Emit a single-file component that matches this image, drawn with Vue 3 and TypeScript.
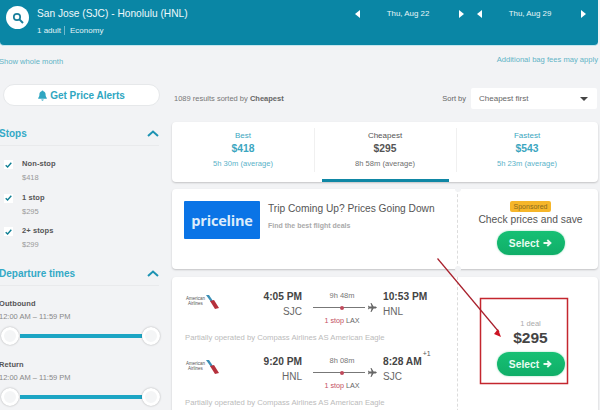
<script setup lang="ts">
const stops = [
  { name: 'Non-stop', price: '$418' },
  { name: '1 stop', price: '$295' },
  { name: '2+ stops', price: '$299' },
]
const sliders = ['Outbound', 'Return']
const tabs = [
  { label: 'Best', price: '$418', time: '5h 30m (average)', active: false },
  { label: 'Cheapest', price: '$295', time: '8h 58m (average)', active: true },
  { label: 'Fastest', price: '$543', time: '5h 23m (average)', active: false },
]
const legs = [
  { dep: '4:05 PM', from: 'SJC', dur: '9h 48m', arr: '10:53 PM', to: 'HNL', plus: false },
  { dep: '9:20 PM', from: 'HNL', dur: '8h 08m', arr: '8:28 AM', to: 'SJC', plus: true },
]
</script>

<template>
  <div class="page">
    <header class="hero">
      <div class="search-btn">
        <svg width="12" height="12" viewBox="0 0 12 12"><circle cx="5" cy="5" r="3.2" fill="none" stroke="#1a7f9c" stroke-width="1.7"/><path d="M7.4 7.4 11 11" stroke="#1a7f9c" stroke-width="2"/></svg>
      </div>
      <div class="route">
        <div class="route-title">San Jose (SJC) - Honolulu (HNL)</div>
        <div class="route-sub"><span class="adult">1 adult</span><span>Economy</span></div>
      </div>
      <div class="dates">
        <div class="date" v-for="d in ['Thu, Aug 22', 'Thu, Aug 29']" :key="d">
          <i class="tri left"></i><span class="date-text">{{ d }}</span><i class="tri right"></i>
        </div>
      </div>
    </header>

    <div class="notes">
      <a class="month">Show whole month</a>
      <a class="bags">Additional bag fees may apply</a>
    </div>

    <div class="main">
      <aside class="side">
        <button class="alerts">
          <svg width="9" height="11" viewBox="0 0 9 11"><path d="M4.5 0.4c.6 0 .9.4.9.9 1.5.4 2.2 1.6 2.2 3.2 0 1.7.5 2.6 1.2 3.4v.8H.2v-.8C.9 7.100 1.400 6.200 1.400 4.500c0-1.600.7-2.800 2.200-3.200 0-.5.3-.9.9-.9zM3.300 9.500h2.400c0 .7-.5 1.200-1.200 1.200s-1.200-.5-1.200-1.200z" fill="#2fa6c1"/></svg>
          Get Price Alerts
        </button>

        <section class="filter stops-filter">
          <div class="filter-head">
            <h3>Stops</h3>
            <svg class="chev" width="12" height="7" viewBox="0 0 12 7"><path d="M1 6 6 1.500 11 6" fill="none" stroke="#1d93b3" stroke-width="2"/></svg>
          </div>
          <div class="stop" v-for="s in stops" :key="s.name">
            <div class="check">
              <svg width="7" height="6" viewBox="0 0 7 6"><path d="M.7 3.200 2.600 5 6.300.8" fill="none" stroke="#0f7f94" stroke-width="1.400"/></svg>
            </div>
            <div>
              <div class="stop-name">{{ s.name }}</div>
              <div class="stop-price">{{ s.price }}</div>
            </div>
          </div>
        </section>

        <section class="filter">
          <div class="filter-head">
            <h3>Departure times</h3>
            <svg class="chev" width="12" height="7" viewBox="0 0 12 7"><path d="M1 6 6 1.500 11 6" fill="none" stroke="#1d93b3" stroke-width="2"/></svg>
          </div>
          <div class="range" v-for="r in sliders" :key="r">
            <div class="range-name">{{ r }}</div>
            <div class="range-time">12:00 AM – 11:59 PM</div>
            <div class="slider"><span class="knob"></span><span class="track"></span><span class="knob"></span></div>
          </div>
        </section>
      </aside>

      <div class="content">
        <div class="toolbar">
          <div class="count">1089 results sorted by <b>Cheapest</b></div>
          <div class="sort">
            <span class="sort-label">Sort by</span>
            <div class="select"><span>Cheapest first</span><i class="caret"></i></div>
          </div>
        </div>

        <div class="card tabs">
          <div class="tab" v-for="t in tabs" :key="t.label" :class="{ active: t.active }">
            <div class="tab-label">{{ t.label }}</div>
            <div class="tab-price">{{ t.price }}</div>
            <div class="tab-time">{{ t.time }}</div>
          </div>
        </div>

        <div class="card split ad">
          <div class="ad-main">
            <div class="logo">priceline</div>
            <div>
              <div class="ad-title">Trip Coming Up? Prices Going Down</div>
              <div class="ad-sub">Find the best flight deals</div>
            </div>
          </div>
          <div class="cta ad-cta">
            <span class="sponsored">Sponsored</span>
            <div class="cta-text">Check prices and save</div>
            <button class="select-btn">Select
              <svg width="9" height="8" viewBox="0 0 9 8"><path d="M.5 4h6.500M4.300 1l3.200 3-3.200 3" fill="none" stroke="#eafbf2" stroke-width="1.800"/></svg>
            </button>
          </div>
          <span class="notch top"></span>
          <span class="notch bottom"></span>
        </div>

        <div class="card split flight">
          <div class="legs">
            <div class="leg" v-for="l in legs" :key="l.dep">
              <div class="leg-row">
                <div class="airline">
                  <div class="aa-text">American<br />Airlines</div>
                  <svg width="13" height="14" viewBox="0 0 13 14"><path d="M0 0 3 0 7 6 5 7z" fill="#3a8fb5"/><path d="M4 6 8 5 13 13 9 14z" fill="#b5303c"/></svg>
                </div>
                <div class="end dep">
                  <div class="time">{{ l.dep }}</div>
                  <div class="code">{{ l.from }}</div>
                </div>
                <div class="path">
                  <div class="dur">{{ l.dur }}</div>
                  <div class="line">
                    <span class="rule"><span class="dot"></span></span>
                    <svg width="9" height="9" viewBox="0 0 10 10"><path d="M10 5 8.500 4H6.200L3.800 0H2.800L4 4H1.700L.8 3H0l.5 2L0 7h.8l.9-1H4l-1.200 4h1l2.400-4h2.300z" fill="#666"/></svg>
                  </div>
                  <div class="via"><em>1 stop</em> LAX</div>
                </div>
                <div class="end arr">
                  <div class="time">{{ l.arr }}<sup v-if="l.plus">+1</sup></div>
                  <div class="code">{{ l.to }}</div>
                </div>
              </div>
              <div class="operated">Partially operated by Compass Airlines AS American Eagle</div>
            </div>
          </div>
          <div class="cta deal">
            <div class="deals">1 deal</div>
            <div class="deal-price">$295</div>
            <button class="select-btn">Select
              <svg width="9" height="8" viewBox="0 0 9 8"><path d="M.5 4h6.500M4.300 1l3.200 3-3.200 3" fill="none" stroke="#eafbf2" stroke-width="1.800"/></svg>
            </button>
          </div>
        </div>
      </div>
    </div>

    <svg class="annotation" width="600" height="410" viewBox="0 0 600 410">
      <rect x="480.500" y="298.500" width="87" height="85" fill="none" stroke="#c4262e" stroke-width="1.500"/>
      <path d="M437.500 258.500 499 332" stroke="#a81f2b" stroke-width="1.200"/>
      <path d="M501 337 494 334 498 329z" fill="#cc1424"/>
    </svg>
  </div>
</template>

<style>
html, body { margin: 0; background: #f2f3f5; }
</style>

<style scoped>
* { box-sizing: border-box; }
.page { position: relative; width: 600px; height: 410px; overflow: hidden; background: #f2f3f5; font-family: "Liberation Sans", Arial, sans-serif; color: #4a4a4a; }

.hero { display: flex; align-items: flex-start; width: 598px; height: 46px; background: #0a86a5; border-bottom: 1px solid #c4e6ee; border-radius: 0 0 4px 4px; color: #fff; }
.search-btn { display: flex; align-items: center; justify-content: center; width: 23px; height: 23px; margin: 6px 0 0 6px; border-radius: 50%; background: #fff; }
.route { margin: 6px 0 0 8px; width: 198px; }
.route-title { font-size: 10.200px; line-height: 15px; color: #eef8fb; white-space: nowrap; }
.route-sub { display: flex; margin-top: 5px; font-size: 8px; line-height: 9px; color: #e2f3f7; }
.adult { padding-right: 3px; margin-right: 5px; border-right: 1px solid #6fb9cc; }
.dates { display: flex; gap: 13px; margin: 9px 0 0 120px; }
.date { display: flex; align-items: center; justify-content: space-between; width: 109px; height: 9px; font-size: 7.900px; color: #e8f6f9; }
.date-text { margin-right: 3px; }
.tri { width: 0; height: 0; border-top: 4px solid transparent; border-bottom: 4px solid transparent; }
.tri.left { border-right: 5px solid #fff; }
.tri.right { border-left: 5px solid #fff; }

.notes { display: flex; justify-content: space-between; width: 598px; height: 38px; font-size: 7.600px; color: #62b3c6; }
.month { margin: 11px 0 0 -1px; }
.bags { margin-top: 9px; }

.main { display: flex; align-items: flex-start; }
.side { width: 160px; flex: none; margin-right: 12px; }
.alerts { display: flex; align-items: center; justify-content: center; gap: 3px; width: 157px; height: 22px; margin-left: 3px; padding: 0; border: 1px solid #e6e8ea; border-radius: 11px; background: #fff; font-family: inherit; font-weight: 700; font-size: 10px; color: #2fa6c1; }
.filter { margin-left: -1px; }
.stops-filter { margin-top: 18px; height: 140px; }
.filter-head { display: flex; align-items: flex-start; justify-content: space-between; height: 22px; width: 160px; padding-top: 4px; border-bottom: 1px solid #e9eaec; margin-bottom: 13px; }
.filter-head h3 { margin: 0; font-size: 10px; line-height: 11px; font-weight: 700; color: #33a9c6; }
.chev { margin-top: 2px; }
.stop { display: flex; height: 33.500px; padding-left: 5px; }
.check { display: flex; align-items: center; justify-content: center; width: 9px; height: 9px; margin: 1px 9px 0 0; background: #fff; }
.stop-name { font-size: 7.500px; font-weight: 700; line-height: 10px; color: #555; letter-spacing: .1px; }
.stop-price { margin-top: 4px; font-size: 7.500px; line-height: 10px; color: #999; }
.range { height: 60.500px; }
.range-name { font-size: 7.500px; font-weight: 700; line-height: 10px; color: #555; letter-spacing: .1px; }
.range-time { margin-top: 3px; font-size: 7.500px; line-height: 10px; color: #888; }
.slider { display: flex; align-items: center; margin-top: 4px; width: 161px; padding-left: 1.500px; height: 20px; }
.knob { flex: none; width: 18px; height: 18px; border-radius: 50%; background: #f4f5f6; border: 3px solid #fff; box-shadow: 0 0 2px rgba(0,0,0,.3); }
.track { flex: 1; height: 4px; margin: 0 0 0 1px; background: #1ca5c4; }

.content { width: 426px; flex: none; }
.toolbar { display: flex; align-items: flex-start; justify-content: space-between; height: 38px; padding: 4px 1px 0 1px; }
.count { margin: 6px 0 0 1px; font-size: 7.500px; line-height: 10px; color: #777; }
.count b { color: #666; }
.sort { display: flex; align-items: center; }
.sort-label { margin-right: 5px; font-size: 7.500px; color: #666; }
.select { display: flex; align-items: center; justify-content: space-between; width: 126px; height: 21px; padding: 0 9px 0 8px; background: #fff; border-radius: 2px; font-size: 8px; color: #666; }
.caret { border-left: 4px solid transparent; border-right: 4px solid transparent; border-top: 4px solid #444; }

.card { background: #fff; border-radius: 4px; box-shadow: 0 1px 2px rgba(0,0,0,.2); }
.tabs { display: flex; height: 60px; margin-bottom: 7px; }
.tab { position: relative; flex: 1; padding-top: 9px; text-align: center; color: #3ba6c0; }
.tab + .tab::before { content: ""; position: absolute; left: 0; top: 6px; bottom: 10px; border-left: 1px solid #f0f0f0; }
.tab.active { color: #555; }
.tab.active::after { content: ""; position: absolute; left: 8px; right: 7px; bottom: 0; height: 3px; background: #0f87a5; }
.tab-label { font-size: 8px; line-height: 10px; }
.tab-price { margin-top: 1px; font-size: 10.300px; line-height: 13px; font-weight: 700; }
.tab-time { margin-top: 4px; font-size: 7.600px; line-height: 10px; opacity: .85; }

.split { display: flex; position: relative; }
.ad { height: 80px; margin-bottom: 8px; }
.ad-main { display: flex; width: 286px; padding: 12px 0 0 12px; border-right: 1px dashed #dcdcdc; }
.logo { display: flex; align-items: center; justify-content: center; width: 76px; height: 38px; margin-right: 8px; border-radius: 1px; background: #0a74e6; color: #dcecfb; font-family: "Open Sans", sans-serif; font-weight: 700; font-size: 14.500px; letter-spacing: -.2px; }
.ad-title { margin-top: 1px; font-size: 10.200px; line-height: 14px; color: #555; white-space: nowrap; }
.ad-sub { margin-top: 5px; font-size: 7px; line-height: 9px; font-weight: 700; color: #aaa; }
.cta { flex: 1; display: flex; flex-direction: column; align-items: center; padding-left: 5px; }
.ad-cta { padding-top: 12px; }
.sponsored { padding: 0 4px; height: 11px; line-height: 11px; border-radius: 2px; background: #f6b62a; font-size: 7px; color: #8a6a20; }
.cta-text { margin: 1px 0 4px; font-size: 10.300px; line-height: 14px; color: #555; white-space: nowrap; }
.select-btn { display: flex; align-items: center; justify-content: center; gap: 4px; width: 68px; height: 24px; padding: 0; border: 0; border-radius: 12px; background: linear-gradient(#16c074, #10ae68); color: #e8fbf1; font-family: inherit; font-weight: 700; font-size: 10.300px; box-shadow: 0 0 2px rgba(18,183,106,.5); }
.notch { position: absolute; left: 283px; width: 6px; height: 6px; border-radius: 50%; background: #f2f3f5; }
.notch.top { top: -3px; }
.notch.bottom { bottom: -3px; }

.flight { height: 150px; }
.legs { width: 286px; padding-top: 12px; border-right: 1px dashed #dcdcdc; }
.leg { height: 65px; padding-left: 13px; }
.leg-row { display: flex; height: 43px; }
.airline { display: flex; align-items: flex-start; width: 70px; padding-top: 6px; }
.aa-text { width: 21px; padding-top: 2px; font-size: 4.500px; line-height: 4.500px; text-align: center; color: #555; }
.end { padding-top: 1px; }
.dep { width: 47px; text-align: right; }
.arr { white-space: nowrap; }
.time { position: relative; font-size: 10.200px; line-height: 13px; font-weight: 700; color: #444; }
.time sup { position: absolute; top: -6px; margin-left: 1px; font-size: 7px; line-height: 9px; font-weight: 400; color: #555; }
.code { margin-top: 2px; font-size: 10px; line-height: 14px; color: #666; }
.path { width: 70px; margin-left: 11px; text-align: center; }
.dur { padding: 2px 12px 0 0; font-size: 7.500px; line-height: 10px; color: #777; }
.line { display: flex; align-items: center; gap: 3px; height: 11px; margin: 1px 0 3px; }
.rule { position: relative; flex: none; width: 52px; height: 1px; background: #777; }
.dot { position: absolute; left: 27px; top: -1.500px; width: 4px; height: 4px; border-radius: 50%; background: #c04a5c; }
.via { padding-right: 12px; font-size: 7.200px; line-height: 9px; color: #666; white-space: nowrap; }
.via em { font-style: normal; color: #c4505f; }
.operated { margin-top: 1px; font-size: 7.700px; line-height: 9px; color: #bbb; white-space: nowrap; }
.deal { padding-top: 42px; }
.deals { font-size: 7.500px; line-height: 9px; color: #aaa; }
.deal-price { margin: 1px 0 5px; font-size: 15.500px; line-height: 18px; font-weight: 700; color: #444; }

.annotation { position: absolute; left: 0; top: 0; pointer-events: none; }
</style>
